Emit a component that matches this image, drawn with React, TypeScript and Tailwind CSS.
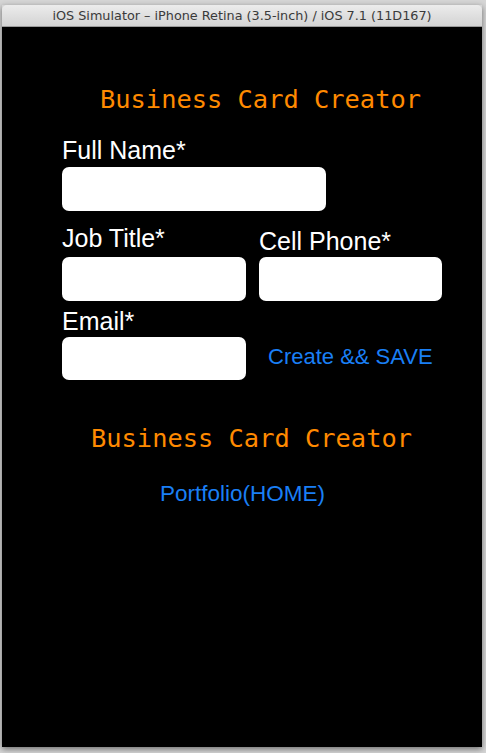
import React from "react";

const Field = ({ label, className = "" }: { label: string; className?: string }) => (
  <div className={`flex flex-col ${className}`}>
    <span className="text-[25px] leading-[25px] text-white">{label}</span>
  </div>
);

const Input = ({ className = "" }: { className?: string }) => (
  <div className={`rounded-[7px] bg-white ${className}`} />
);

export default function App() {
  return (
    <div className="h-[753px] w-[486px] overflow-hidden bg-[#d6d6d6] font-['Liberation_Sans',Arial,sans-serif]">
      <div className="ml-[2px] mt-[5px] flex h-[742px] w-[480px] flex-col shadow-[0_2px_6px_rgba(0,0,0,0.5)]">
        {/* window title bar */}
        <div className="flex h-[22px] items-center justify-center rounded-t-[5px] border-b border-[#9a9a9a] bg-gradient-to-b from-[#ececec] to-[#d3d3d3] font-['DejaVu_Sans',sans-serif] text-[12.8px] text-[#3a3a3a]">
          iOS Simulator – iPhone Retina (3.5-inch) / iOS 7.1 (11D167)
        </div>

        {/* simulator screen */}
        <div className="flex flex-1 flex-col bg-black pl-[60px]">
          <h1 className="ml-[38px] mt-[57px] font-['DejaVu_Sans_Mono',monospace] text-[25.4px] leading-[30px] font-normal text-[#ff8a00]">
            Business Card Creator
          </h1>

          <Field label="Full Name*" className="mt-[24px]" />
          <Input className="mt-[4px] h-[44px] w-[264px]" />

          <div className="flex gap-[13px]">
            <div className="flex w-[184px] flex-col">
              <Field label="Job Title*" className="mt-[15px]" />
              <Input className="mt-[6px] h-[44px]" />
            </div>
            <div className="flex w-[183px] flex-col">
              <Field label="Cell Phone*" className="mt-[18px]" />
              <Input className="mt-[3px] h-[44px]" />
            </div>
          </div>

          <Field label="Email*" className="mt-[8px]" />
          <div className="mt-[3px] flex gap-[13px]">
            <Input className="h-[43px] w-[184px]" />
            <button className="ml-[9px] mt-[9px] self-start text-[22px] leading-[22px] text-[#1a7ff5]">
              Create &amp;&amp; SAVE
            </button>
          </div>

          <h2 className="ml-[29px] mt-[43px] font-['DejaVu_Sans_Mono',monospace] text-[25.4px] leading-[30px] font-normal text-[#ff8a00]">
            Business Card Creator
          </h2>

          <button className="ml-[98px] mt-[30px] self-start text-[22.5px] leading-[22.5px] text-[#1a7ff5]">
            Portfolio(HOME)
          </button>
        </div>
      </div>
    </div>
  );
}
